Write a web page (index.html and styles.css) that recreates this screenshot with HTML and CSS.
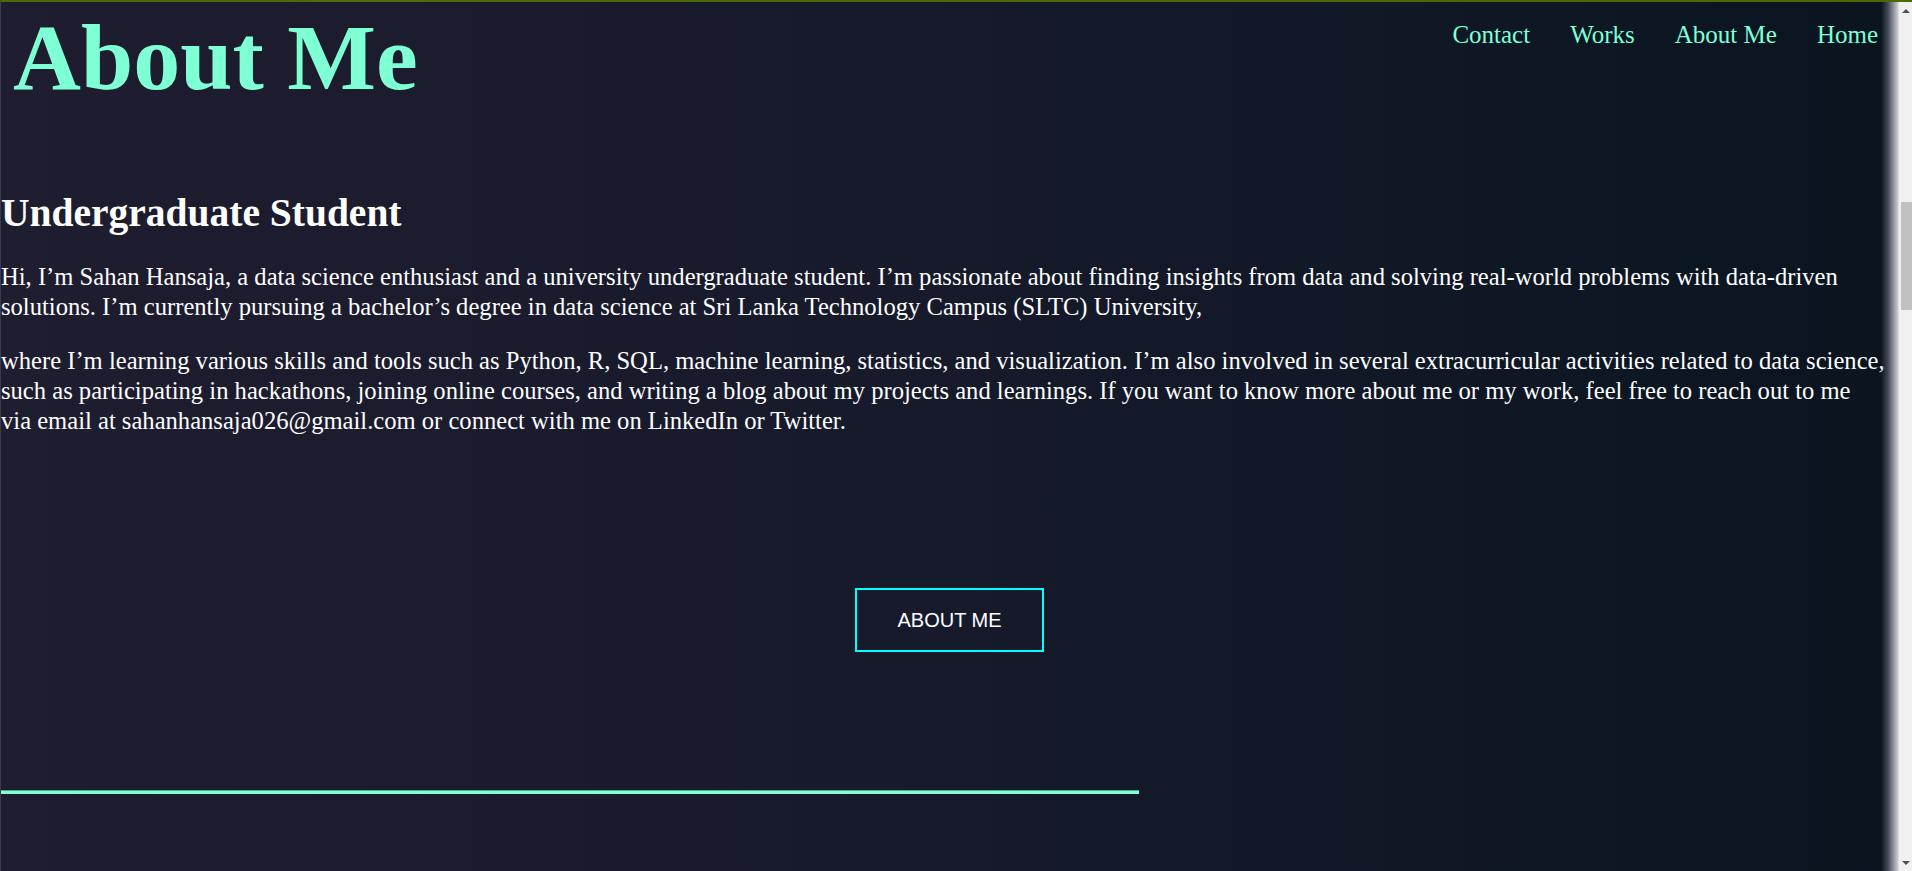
FILE: index.html
```html
<!DOCTYPE html>
<html lang="en">
<head>
<meta charset="utf-8">
<title>About Me</title>
<link rel="stylesheet" href="styles.css">
</head>
<body>
<div class="frame">
  <main class="page">
    <header class="top">
      <h1 class="title">About Me</h1>
      <nav class="nav">
        <a class="nav-link" href="#">Contact</a>
        <a class="nav-link" href="#">Works</a>
        <a class="nav-link" href="#">About Me</a>
        <a class="nav-link" href="#">Home</a>
      </nav>
    </header>
    <section class="about">
      <h2 class="role">Undergraduate Student</h2>
      <p class="text">Hi, I’m Sahan Hansaja, a data science enthusiast and a university undergraduate student. I’m passionate about finding insights from data and solving real-world problems with data-driven solutions. I’m currently pursuing a bachelor’s degree in data science at Sri Lanka Technology Campus (SLTC) University,</p>
      <p class="text">where I’m learning various skills and tools such as Python, R, SQL, machine learning, statistics, and visualization. I’m also involved in several extracurricular activities related to data science, such as participating in hackathons, joining online courses, and writing a blog about my projects and learnings. If you want to know more about me or my work, feel free to reach out to me via&nbsp;email at sahanhansaja026@gmail.com or connect with me on LinkedIn or Twitter.</p>
    </section>
    <div class="cta">
      <a class="btn" href="#">ABOUT ME</a>
    </div>
    <div class="rule"></div>
    <div class="edge-shadow"></div>
  </main>
  <div class="scrollbar">
    <div class="sb-arrow sb-up"></div>
    <div class="sb-track">
      <div class="sb-thumb"></div>
    </div>
    <div class="sb-arrow sb-down"></div>
  </div>
</div>
</body>
</html>
```
FILE: styles.css
```css
* { box-sizing: border-box; }

html, body {
  margin: 0;
  padding: 0;
  height: 100%;
  overflow: hidden;
}

body {
  font-family: "Liberation Serif", "Times New Roman", serif;
  background: #1d1c2e;
}

.frame {
  height: 871px;
  display: flex;
  border-top: 2px solid #4b6a04;
  border-left: 1px solid #3c3c4c;
}

.page {
  position: relative;
  flex: 1;
  min-width: 0;
  background: linear-gradient(90deg, #1f1d30 0%, #161a2b 50%, #0a1520 100%);
  color: #ffffff;
  overflow: hidden;
}

.top {
  display: flex;
  justify-content: space-between;
  align-items: flex-start;
}

.title {
  margin: 0;
  padding: 1px 0 0 12px;
  font-size: 94px;
  font-weight: bold;
  line-height: normal;
  color: #7fffd4;
}

.nav {
  display: flex;
  padding-top: 19px;
}

.nav-link {
  padding: 0 20px;
  font-size: 25px;
  line-height: normal;
  color: #7fffd4;
  text-decoration: none;
}

.about {
  padding-top: 79px;
}

.role {
  margin: 0 0 26px;
  font-size: 39.5px;
  font-weight: bold;
  line-height: normal;
}

.text {
  margin: 0 0 24px;
  font-size: 24.6px;
  line-height: 30px;
}

.cta {
  display: flex;
  justify-content: center;
  padding-top: 128px;
}

.btn {
  display: block;
  padding: 18px 40px;
  border: 2px solid #00ffff;
  font-family: "Liberation Sans", Arial, sans-serif;
  font-size: 20px;
  line-height: 24px;
  color: #ffffff;
  text-decoration: none;
}

.rule {
  width: 60%;
  height: 4px;
  margin-top: 138px;
  background: #7fffd4;
  border-top: 1px solid #55a892;
}

.edge-shadow {
  position: absolute;
  top: 0;
  right: 0;
  bottom: 0;
  width: 17px;
  background: linear-gradient(90deg, rgba(120,125,135,0) 0%, rgba(110,115,125,0.55) 40%, rgba(215,215,220,0.95) 100%);
  pointer-events: none;
}

.scrollbar {
  width: 14px;
  flex: none;
  display: flex;
  flex-direction: column;
  background: #f0f0f0;
  border-left: 1px solid #dcdcdc;
}

.sb-arrow {
  height: 17px;
  flex: none;
  display: flex;
  align-items: center;
  justify-content: center;
}

.sb-up::before,
.sb-down::before {
  content: "";
  width: 0;
  height: 0;
  border-left: 4px solid transparent;
  border-right: 4px solid transparent;
}

.sb-up::before { border-bottom: 4px solid #505050; }
.sb-down::before { border-top: 4px solid #505050; }

.sb-track {
  flex: 1;
  padding-left: 2px;
}

.sb-thumb {
  margin-top: 183px;
  height: 108px;
  background: #c1c1c1;
}
```
